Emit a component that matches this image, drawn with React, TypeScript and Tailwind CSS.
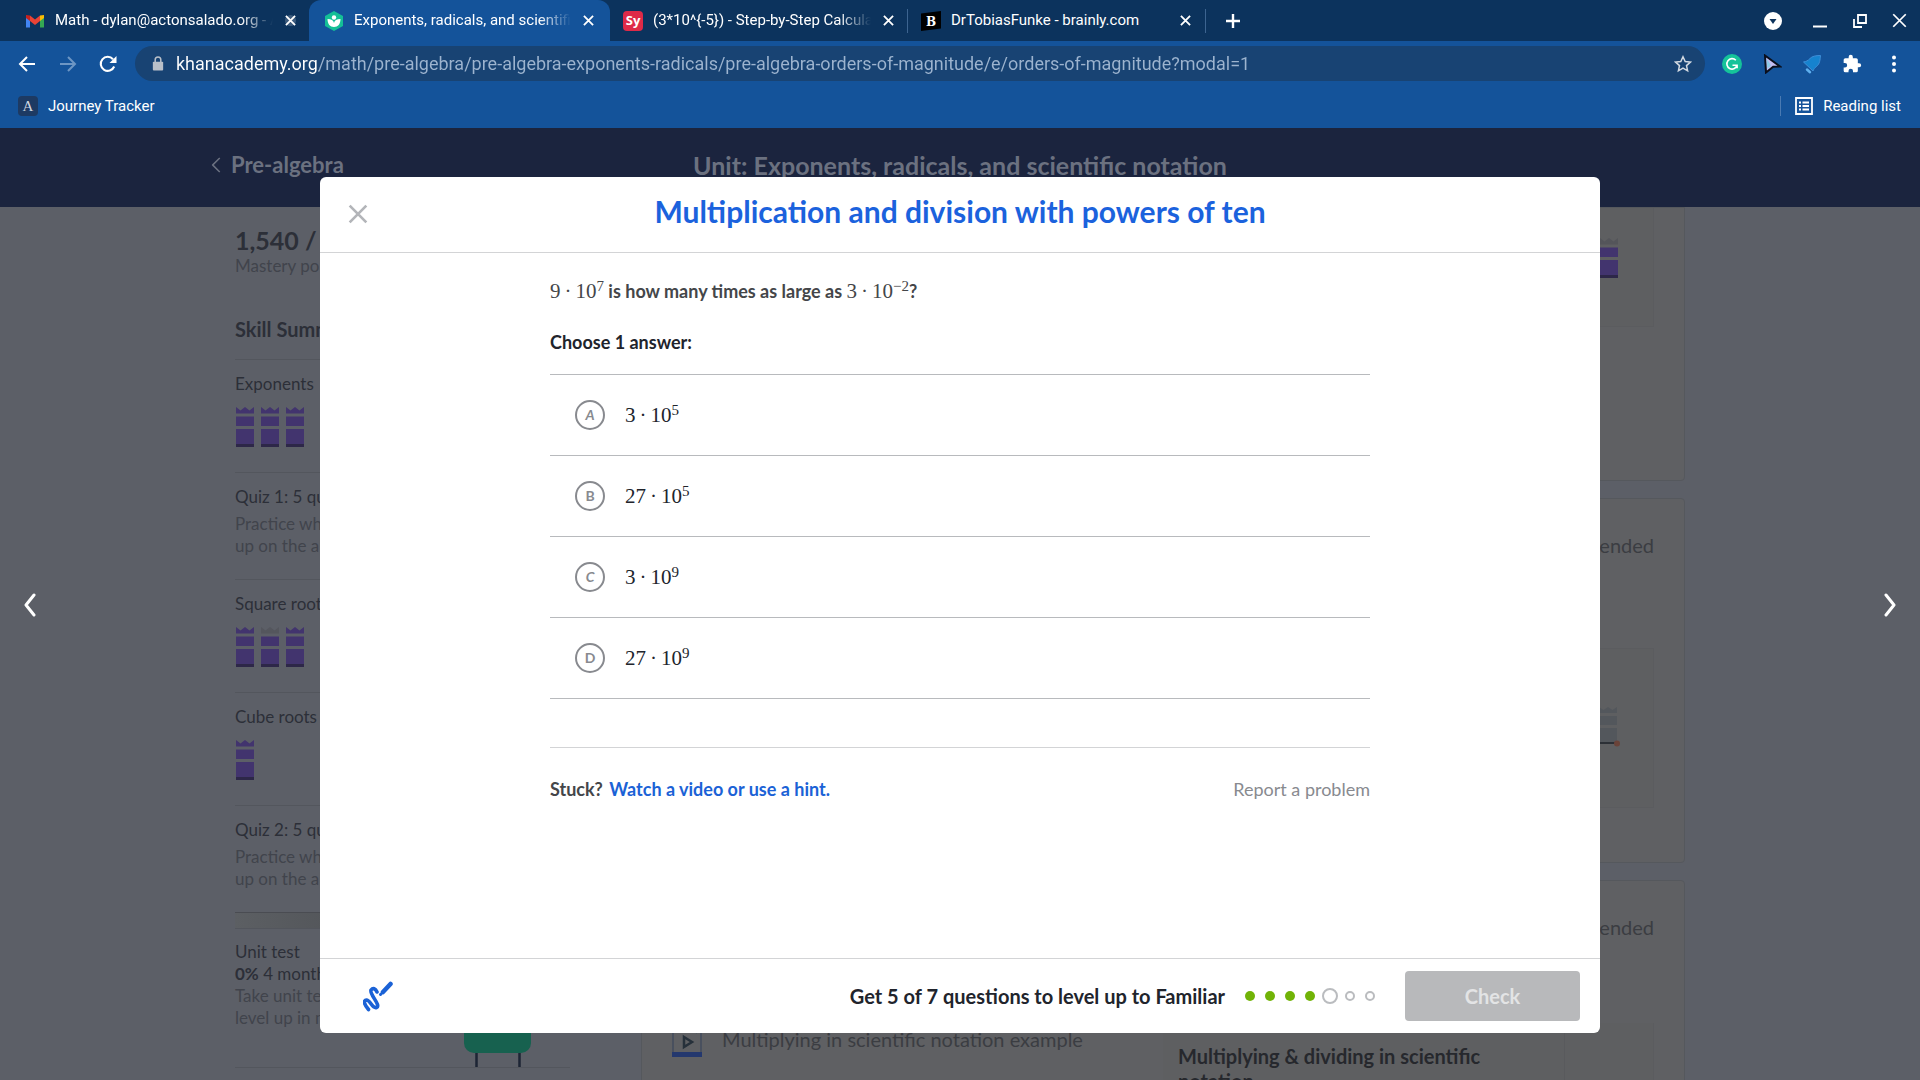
import { useState } from "react"
import type { ReactNode } from "react"

const ROBOTO = "font-['Roboto',sans-serif]"
const LATO = "font-['Lato',sans-serif]"

export default function App() {
  return (
    <div className={`flex h-screen flex-col overflow-hidden bg-[#5c5f67] ${LATO}`}>
      <BrowserChrome />
      <div className="relative min-h-0 flex-1 overflow-hidden">
        <UnitPage />
        <div className="absolute inset-0 flex items-center justify-between px-6 pb-[47px] pt-[49px]">
          <button type="button" aria-label="Previous exercise" className="w-3 text-white">
            <Chevron className="h-6 w-3" strokeWidth={3} />
          </button>
          <ExerciseModal />
          <button type="button" aria-label="Next exercise" className="w-3 text-white">
            <Chevron className="h-6 w-3 rotate-180" strokeWidth={3} />
          </button>
        </div>
      </div>
    </div>
  )
}

/* ---------- browser ---------- */

interface TabProps {
  icon: ReactNode
  title: string
  active?: boolean
  className: string
  faded?: boolean
}

function Tab({ icon, title, active, className, faded }: TabProps) {
  const [hovered, setHovered] = useState(false)
  return (
    <div
      onMouseEnter={() => setHovered(true)}
      onMouseLeave={() => setHovered(false)}
      className={`flex h-full items-center gap-3 ${active ? "rounded-t-xl bg-[#14539a]" : ""} ${className}`}
    >
      <button type="button" className="flex min-w-0 flex-1 items-center gap-2.5 text-left">
        <span className="flex h-5 w-5 shrink-0 items-center justify-center">{icon}</span>
        <span className={`flex-1 overflow-hidden whitespace-nowrap ${faded ? "mask-r-from-85% mask-r-to-100%" : ""}`}>{title}</span>
      </button>
      <button type="button" aria-label={`Close ${title}`} className={`rounded-full ${hovered ? "bg-white/20" : ""}`}>
        <Cross className="h-[11px] w-[11px]" strokeWidth={2} />
      </button>
    </div>
  )
}

function BrowserChrome() {
  return (
    <header className={`shrink-0 bg-[#14539a] text-white ${ROBOTO}`}>
      <div className="flex h-[41px] items-center bg-[#0c335d] text-[15px]">
        <Tab icon={<GmailIcon />} title="Math - dylan@actonsalado.org - A" faded className="w-[309px] pl-[25px] pr-[13px]" />
        <Tab icon={<KhanIcon />} title="Exponents, radicals, and scientific" active faded className="w-[301px] pl-[15px] pr-4" />
        <Tab
          icon={<span className="flex h-5 w-5 items-center justify-center rounded-sm bg-[#de2a48] font-['Open_Sans',sans-serif] text-[13px] font-bold">Sy</span>}
          title="(3*10^{-5}) - Step-by-Step Calcula"
          faded
          className="w-[297px] pl-[13px] pr-[13px]"
        />
        <span className="h-6 w-px bg-[#3d6490]" />
        <Tab icon={<BrainlyIcon />} title="DrTobiasFunke - brainly.com" className="w-[297px] pl-[13px] pr-[14px]" />
        <span className="h-6 w-px bg-[#3d6490]" />
        <button type="button" aria-label="New tab" className="ml-[19px]">
          <svg viewBox="0 0 16 16" className="h-4 w-4"><path d="M8 1v14M1 8h14" stroke="white" strokeWidth="2.4" /></svg>
        </button>
        <div className="ml-auto flex items-center gap-6 pr-[13px]">
          <button type="button" aria-label="Search tabs">
            <svg viewBox="0 0 18 18" className="h-[18px] w-[18px]"><circle cx="9" cy="9" r="9" fill="white" /><path d="M5.5 7h7L9 12z" fill="#0c335d" /></svg>
          </button>
          <button type="button" aria-label="Minimize" className="ml-1.5">
            <svg viewBox="0 0 16 16" className="h-4 w-4"><path d="M1 13.5h14" stroke="white" strokeWidth="2" /></svg>
          </button>
          <button type="button" aria-label="Restore">
            <svg viewBox="0 0 16 16" className="h-4 w-4" fill="none" stroke="white" strokeWidth="1.8"><path d="M6 2h8v8H6zM2 6v8h8" /></svg>
          </button>
          <button type="button" aria-label="Close window">
            <Cross className="h-[15px] w-[15px]" strokeWidth={1.4} />
          </button>
        </div>
      </div>

      <div className="flex h-[45px] items-center pl-[18px] pr-[18px]">
        <button type="button" aria-label="Back">
          <svg viewBox="0 0 18 18" className="h-[18px] w-[18px]" fill="none" stroke="white" strokeWidth="2"><path d="M17 9H2M9 2L2 9l7 7" /></svg>
        </button>
        <button type="button" aria-label="Forward" className="ml-[23px] text-[#6d96c4]">
          <svg viewBox="0 0 18 18" className="h-[18px] w-[18px]" fill="none" stroke="currentColor" strokeWidth="2"><path d="M1 9h15M9 2l7 7-7 7" /></svg>
        </button>
        <button type="button" aria-label="Reload" className="ml-[22px]">
          <svg viewBox="0 0 18 18" className="h-[18px] w-[18px]">
            <path d="M15.2 11.5A7 7 0 1 1 14 4.2" fill="none" stroke="white" strokeWidth="2.1" />
            <path d="M17.5 1v7h-7z" fill="white" />
          </svg>
        </button>
        <div className="ml-[18px] flex h-[35px] flex-1 items-center rounded-full bg-[#184373] pl-[17px] pr-[13px]">
          <svg viewBox="0 0 12 16" className="h-[15px] w-3 text-[#b9c0c9]">
            <path d="M3 7V4a3 3 0 0 1 6 0v3" fill="none" stroke="currentColor" strokeWidth="1.6" />
            <rect x="0.5" y="6" width="11" height="9.5" rx="1" fill="currentColor" />
          </svg>
          <input
            type="text"
            aria-label="Address"
            defaultValue="khanacademy.org/math/pre-algebra/pre-algebra-exponents-radicals/pre-algebra-orders-of-magnitude/e/orders-of-magnitude?modal=1"
            className="ml-3 min-w-0 flex-1 bg-[linear-gradient(90deg,#ffffff_143px,#9db4cf_143px)] bg-clip-text text-[18px] text-transparent caret-white outline-none"
          />
          <button type="button" aria-label="Bookmark this page">
            <svg viewBox="0 0 18 18" className="h-[18px] w-[18px]"><path d="M9 1.8l2.2 4.8 5.2.5-3.9 3.5 1.1 5.2L9 13.1l-4.6 2.7 1.1-5.2L1.6 7.1l5.2-.5z" fill="none" stroke="#d3dae2" strokeWidth="1.5" /></svg>
          </button>
        </div>
        <div className="ml-[17px] flex items-center gap-5">
          <svg viewBox="0 0 20 20" className="h-5 w-5">
            <circle cx="10" cy="10" r="10" fill="#15c39a" />
            <path d="M13.8 6.2A5.2 5.2 0 1 0 15 11.6M10.5 11.2h4.6v3" fill="none" stroke="white" strokeWidth="1.6" />
          </svg>
          <svg viewBox="0 0 20 20" className="h-5 w-5">
            <path d="M3 1.5L18 12.5l-6.8.3L4 18.5z" fill="#c5bdf2" stroke="#0b0f1c" strokeWidth="2" />
            <path d="M4.5 4.5l4.6 7-3.7 3.3z" fill="#8ecbe8" />
          </svg>
          <svg viewBox="0 0 20 20" className="h-5 w-5">
            <path d="M18.5 1.5c-5 0-8.5.8-10.5 3C6 6.8 4 7.5 1.5 8l9.5 9c.8-2 1.5-3 3.5-4.5 3.5-3 3.5-6.5 4-11z" fill="#1683cf" stroke="#3f8ed8" />
            <path d="M5 15.5l3 2.7" stroke="#5fb0ef" strokeWidth="2.5" strokeLinecap="round" />
          </svg>
          <svg viewBox="0 0 24 24" className="h-5 w-5"><path fill="white" d="M20.5 11H19V7a2 2 0 0 0-2-2h-4V3.5a2.5 2.5 0 0 0-5 0V5H4a2 2 0 0 0-2 2v3.8h1.5a2.7 2.7 0 0 1 0 5.4H2V20a2 2 0 0 0 2 2h3.8v-1.5a2.7 2.7 0 0 1 5.4 0V22H17a2 2 0 0 0 2-2v-4h1.5a2.5 2.5 0 0 0 0-5z" /></svg>
          <button type="button" aria-label="Browser menu" className="ml-1">
            <svg viewBox="0 0 16 18" className="h-[18px] w-4" fill="white"><circle cx="8" cy="2.5" r="2" /><circle cx="8" cy="9" r="2" /><circle cx="8" cy="15.5" r="2" /></svg>
          </button>
        </div>
      </div>

      <div className="flex h-[42px] items-center justify-between pb-0.5 pl-[18px] pr-[19px] text-[15px]">
        <a href="#journey" className="flex items-center gap-2.5">
          <span className="flex h-5 w-5 items-center justify-center rounded-sm bg-[#1d3a63] font-['Liberation_Serif',serif] text-[15px] text-[#cfd6e0]">A</span>
          Journey Tracker
        </a>
        <div className="flex items-center">
          <span className="h-5 w-px bg-[#4a7ab2]" />
          <button type="button" className="ml-3.5 flex items-center gap-2.5">
            <svg viewBox="0 0 18 18" className="h-[18px] w-[18px]" fill="none" stroke="white" strokeWidth="1.8">
              <path d="M1 1h16v16H1zM4 5.5h2M4 9h2M4 12.5h2M7.5 5.5H14M7.5 9H14M7.5 12.5H14" />
            </svg>
            Reading list
          </button>
        </div>
      </div>
    </header>
  )
}

/* ---------- dimmed unit page ---------- */

function UnitPage() {
  return (
    <div>
      <div className="h-[79px] bg-[#1b243e] text-[#6b7180]">
        <div className="mx-auto grid max-w-[1498px] grid-cols-[1fr_auto_1fr] items-center pt-[21px]">
          <a href="#pre-algebra" className="flex items-center gap-2.5 text-[22px] font-bold leading-8">
            <Chevron className="h-4 w-[10px]" strokeWidth={2} />
            Pre-algebra
          </a>
          <h1 className="text-[25px] font-bold leading-8">Unit: Exponents, radicals, and scientific notation</h1>
        </div>
      </div>
      <div className="mx-auto flex max-w-[1450px] gap-[71px]">
        <Sidebar />
        <Lessons />
      </div>
    </div>
  )
}

function Sidebar() {
  return (
    <aside className="w-[335px] shrink-0 pt-[18px] text-[17px] leading-[22px] text-[#2c2f38]">
      <p className="text-[25px] font-bold leading-[30px]">1,540 / 2,600</p>
      <p className="text-[#41444c]">Mastery points</p>
      <h2 className="mt-10 pb-[18px] text-xl font-bold leading-6">Skill Summary</h2>
      <SkillSection title="Exponents" levels={[true, true, true]} />
      <QuizSection title="Quiz 1: 5 questions" />
      <SkillSection title="Square roots" levels={[true, false, true]} />
      <SkillSection title="Cube roots" levels={[true]} />
      <QuizSection title="Quiz 2: 5 questions" />
      <div className="h-4 border-t border-[#4a4c52] bg-linear-to-r from-[#5c5f63] to-[#3f4146]" />
      <section className="flex justify-between border-y border-[#53565d] pt-3">
        <div className="pb-[38px]">
          <h3>Unit test</h3>
          <p><b>0%</b> 4 months ago</p>
          <p className="text-[#41444c]">Take unit test to<br />level up in many</p>
        </div>
        <svg viewBox="0 0 67 60" className="mr-[39px] h-[60px] w-[67px] self-end">
          <rect width="67" height="46" rx="10" fill="#17614f" />
          <path d="M12.5 46v14M55.5 46v14" stroke="#1c2535" strokeWidth="2.5" />
        </svg>
      </section>
    </aside>
  )
}

function SkillSection({ title, levels }: { title: string; levels: boolean[] }) {
  return (
    <section className="border-t border-[#53565d] pb-[25px] pt-[13px]">
      <h3>{title}</h3>
      <div className="mt-3 flex gap-[7px] pl-px">
        {levels.map((crowned, i) => (
          <Castle key={i} crown={crowned ? "#42346e" : "#54565d"} block="#42346e" base="#2d2748" />
        ))}
      </div>
    </section>
  )
}

function QuizSection({ title }: { title: string }) {
  return (
    <section className="border-t border-[#53565d] pb-[22px] pt-[13px]">
      <h3>{title}</h3>
      <p className="mt-[5px] text-[#41444c]">Practice what you’ve learned,<br />up on the above skills</p>
    </section>
  )
}

function Lessons() {
  return (
    <div className="flex min-w-0 flex-1 flex-col gap-[17px] text-[20px] text-[#3b3d42]">
      <Card className="rounded-b pb-[153px]">
        <div className="flex justify-end border-b border-r border-[#5b5c5f] bg-[#5e5f61] pb-12 pr-[35px] pt-[30px]">
          <Castle crown="#54555a" block="#42346e" base="#2d2748" />
        </div>
      </Card>
      <Card className="rounded pb-[54px] pt-[34px]">
        <p className="text-right leading-6">Recommended</p>
        <div className="mt-[91px] flex justify-end border border-[#5b5c5f] bg-[#5e5f61] pb-[60px] pr-[30px] pt-[58px]">
          <svg viewBox="0 0 24 40" className="h-10 w-6">
            <path d="M0 0l4.5 3L9 0l4.5 3L18 0v6H0zM0 9h18v9H0zM0 21h18v16H0z" fill="#53575c" />
            <path d="M0 36h18" stroke="#2c3036" strokeWidth="2" />
            <circle cx="18" cy="36.5" r="3" fill="#6a4339" />
          </svg>
        </div>
      </Card>
      <Card className="rounded pt-[34px]">
        <p className="text-right leading-6">Recommended</p>
        <div className="mt-[84px] flex">
          <a href="#video" className="flex flex-1 items-start gap-5 leading-6">
            <svg viewBox="0 0 30 34" className="h-[34px] w-[30px]">
              <path d="M1 0h28v30H1z" fill="none" stroke="#34405a" />
              <rect y="29" width="30" height="5" fill="#24386e" />
              <path d="M12 14l8 5-8 5z" fill="none" stroke="#26303a" strokeWidth="2.5" />
              <path d="M21 4l5 5" stroke="#2f4a5e" strokeWidth="4" />
            </svg>
            <span className="pt-1">Multiplying in scientific notation example</span>
          </a>
          <div className="flex w-1/2 border-r border-[#5b5c5f] bg-[#5e5f61]">
            <p className="flex-1 border-r border-[#595a5d] px-[15px] pt-[21px] font-bold leading-[25px] text-[#26282d]">
              Multiplying & dividing in scientific<br />notation
            </p>
            <span className="w-[88px]" />
          </div>
        </div>
      </Card>
    </div>
  )
}

function Card({ className, children }: { className: string; children: ReactNode }) {
  return <section className={`border border-[#55585d] bg-[#5f6063] px-[30px] ${className}`}>{children}</section>
}

/* ---------- exercise ---------- */

const choices = [
  { letter: "A", base: "3", exponent: "5" },
  { letter: "B", base: "27", exponent: "5" },
  { letter: "C", base: "3", exponent: "9" },
  { letter: "D", base: "27", exponent: "9" },
]

function ExerciseModal() {
  const [selected, setSelected] = useState<string | null>(null)

  return (
    <div role="dialog" aria-labelledby="exercise-title" className="flex h-full w-full max-w-[1280px] flex-col rounded-md bg-white text-[#21242c]">
      <div className="grid h-[76px] shrink-0 grid-cols-[1fr_auto_1fr] items-center border-b border-[#d3d4d6] px-7 pb-0.5">
        <button type="button" aria-label="Close" className="justify-self-start text-[#b3b5b9]">
          <Cross className="h-5 w-5" strokeWidth={1.6} />
        </button>
        <h2 id="exercise-title" className="pb-1.5 text-[30px] font-bold leading-9 text-[#1b62dd]">
          Multiplication and division with powers of ten
        </h2>
      </div>

      <div className="mx-auto w-full max-w-[820px] flex-1 pt-[26px] text-[18px]">
        <p className="font-bold leading-6 text-[#444649]">
          <Power base="9" exponent="7" /> is how many times as large as <Power base="3" exponent="−2" />?
        </p>
        <fieldset className="mt-[27px]">
          <legend className="mb-5 font-bold leading-6">Choose 1 answer:</legend>
          <div className="border-t border-[#b8babd]">
            {choices.map(({ letter, base, exponent }) => (
              <label key={letter} className="flex h-[81px] cursor-pointer items-center gap-5 border-b border-[#b8babd] pl-[25px]">
                <span className="grid place-items-center text-sm font-bold text-[#888a8f]">
                  <input
                    type="radio"
                    name="answer"
                    value={letter}
                    checked={selected === letter}
                    onChange={() => setSelected(letter)}
                    className="col-start-1 row-start-1 h-[30px] w-[30px] appearance-none rounded-full border-2 border-[#888a8f] checked:border-[#1865f2]"
                  />
                  <span className={`col-start-1 row-start-1 ${letter === "A" || letter === "C" ? "italic" : ""}`}>{letter}</span>
                </span>
                <Power base={base} exponent={exponent} />
              </label>
            ))}
          </div>
        </fieldset>
        <div className="mt-12 flex items-center justify-between border-t border-[#d3d4d6] pt-[29px] leading-6">
          <p className="font-bold text-[#444649]">
            Stuck? <a href="#hint" className="ml-0.5 text-[#1b62d6]">Watch a video or use a hint.</a>
          </p>
          <a href="#report" className="text-[#888a8f]">Report a problem</a>
        </div>
      </div>

      <div className="flex h-[75px] shrink-0 items-center border-t border-[#d3d4d6] pl-[43px] pr-5">
        <button type="button" aria-label="Show scratchpad">
          <svg viewBox="0 0 30 32" className="h-8 w-[30px]" fill="none" stroke="#1b62d6" strokeLinecap="round">
            <path d="M5.500 29.500C1 24 0 20.500 3.500 20c4 0 5.500 9 10 7.500 5-2-7.500-13.500-5.500-17.500 2-2.500 4.500-1.500 6 2" strokeWidth="3.6" />
            <path d="M20 12l7.500-8" strokeWidth="4.5" />
            <path d="M17.500 14.500l.5-.5" strokeWidth="3" />
          </svg>
        </button>
        <p className="ml-auto text-[20px] font-bold leading-6">Get 5 of 7 questions to level up to Familiar</p>
        <div className="ml-5 flex items-center gap-2.5">
          {[0, 1, 2, 3].map((i) => <span key={i} className="h-2.5 w-2.5 rounded-full bg-[#71b307]" />)}
          <span className="-mx-[3px] h-4 w-4 rounded-full border-2 border-[#babcbf]" />
          {[5, 6].map((i) => <span key={i} className="h-2.5 w-2.5 rounded-full border-2 border-[#babcbf]" />)}
        </div>
        <button type="button" disabled={!selected} className="ml-[30px] h-[50px] w-[175px] rounded bg-[#1865f2] text-[20px] font-bold text-white disabled:bg-[#b8b9bb] disabled:text-[#e3e4e5]">
          Check
        </button>
      </div>
    </div>
  )
}

function Power({ base, exponent }: { base: string; exponent: string }) {
  return (
    <span className="font-['Liberation_Serif',serif] text-[21px] font-normal leading-6">
      {base}<span className="mx-1">·</span>10<sup className="text-[15px]">{exponent}</sup>
    </span>
  )
}

/* ---------- shapes ---------- */

function Castle({ crown, block, base }: { crown: string; block: string; base: string }) {
  return (
    <svg viewBox="0 0 18 40" className="h-10 w-[18px]">
      <path d="M0 0l4.500 3.500L9 0l4.500 3.500L18 0v6.500H0z" fill={crown} />
      <path d="M0 9.500h18V19H0zM0 22h18v16H0z" fill={block} />
      <path d="M0 37h18v3H0z" fill={base} />
    </svg>
  )
}

function Cross({ className, strokeWidth }: { className: string; strokeWidth: number }) {
  return (
    <svg viewBox="0 0 12 12" className={className}>
      <path d="M1 1l10 10M11 1L1 11" stroke="currentColor" strokeWidth={strokeWidth} />
    </svg>
  )
}

function Chevron({ className, strokeWidth }: { className: string; strokeWidth: number }) {
  return (
    <svg viewBox="0 0 12 24" className={className} preserveAspectRatio="none">
      <path d="M10 2L2 12l8 10" fill="none" stroke="currentColor" strokeWidth={strokeWidth} strokeLinecap="round" strokeLinejoin="round" />
    </svg>
  )
}

function GmailIcon() {
  return (
    <svg viewBox="0 0 20 16" className="h-4 w-5">
      <path d="M1 3v11.500h4V6z" fill="#4285f4" />
      <path d="M15 6v8.500h4V3z" fill="#34a853" />
      <path d="M15 2.500l4-.5v3l-4 3z" fill="#fbbc04" />
      <path d="M1 2l4 .5v5.500L1 5z" fill="#c5221f" />
      <path d="M5 2.500l5 4 5-4V8l-5 4-5-4z" fill="#ea4335" />
    </svg>
  )
}

function KhanIcon() {
  return (
    <svg viewBox="0 0 20 20" className="h-5 w-5">
      <path d="M10 0l9 5v10l-9 5-9-5V5z" fill="#14bf96" />
      <circle cx="10" cy="6.500" r="2.200" fill="white" />
      <path d="M3.500 8c4 0 6 1.500 6.500 4 .5-2.500 2.500-4 6.500-4 0 5-2.500 8-6.500 8s-6.500-3-6.500-8z" fill="white" />
    </svg>
  )
}

function BrainlyIcon() {
  return (
    <svg viewBox="0 0 20 20" className="h-5 w-5">
      <path d="M0 2.500L20 0v17.500L0 20z" fill="black" />
      <text x="10" y="14.500" textAnchor="middle" fontFamily="DejaVu Serif, serif" fontWeight="bold" fontSize="12" fill="white">B</text>
    </svg>
  )
}
